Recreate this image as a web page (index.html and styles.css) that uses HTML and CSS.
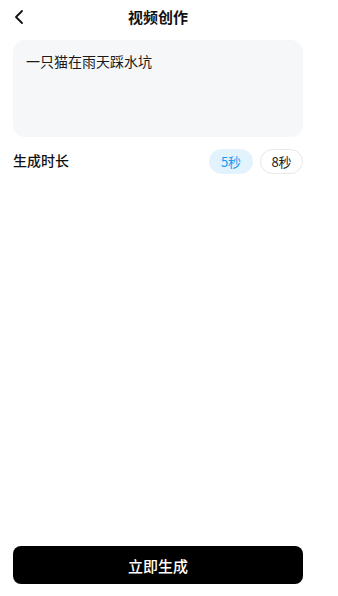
FILE: index.html
```html
<!DOCTYPE html>
<html lang="zh-CN">
<head>
  <meta charset="UTF-8">
  <title>视频创作</title>
  <link rel="stylesheet" href="styles.css">
</head>
<body>

<div class="page">
  <div class="top-bar">
    <button class="back-btn" type="button" aria-label="返回">
      <svg width="12" height="16" viewBox="0 0 12 16">
        <path d="M9 2 L3 8 L9 14" fill="none" stroke="#111" stroke-width="1.8" stroke-linecap="round" stroke-linejoin="round"/>
      </svg>
    </button>
    <h1 class="title">视频创作</h1>
  </div>

  <div class="prompt-box">
    <p class="prompt-text">一只猫在雨天踩水坑</p>
  </div>

  <div class="duration-row">
    <span class="duration-label">生成时长</span>
    <div class="duration-options">
      <button class="pill active" type="button">5秒</button>
      <button class="pill" type="button">8秒</button>
    </div>
  </div>

  <button class="generate-button" type="button">立即生成</button>
</div>

</body>
</html>
```

FILE: styles.css
```css
body {
  margin: 0;
  background: #fff;
  font-family: "Noto Sans CJK SC", "Noto Sans", sans-serif;
  color: #111;
}

.page {
  width: 290px;
  margin-left: 13px;
  height: 596px;
  display: flex;
  flex-direction: column;
  box-sizing: border-box;
  padding-bottom: 12px;
}

.top-bar {
  position: relative;
  height: 35px;
  display: flex;
  align-items: center;
  justify-content: center;
  padding-bottom: 2px;
  box-sizing: border-box;
}

.back-btn {
  position: absolute;
  left: 0;
  top: 8px;
  background: none;
  border: none;
  padding: 0;
  width: 14px;
  height: 18px;
  display: flex;
  align-items: center;
}

.title {
  margin: 0;
  font-size: 15px;
  font-weight: bold;
  line-height: 20px;
}

.prompt-box {
  margin-top: 5px;
  height: 97px;
  background: #f5f7f9;
  border-radius: 12px;
  padding: 11px 13px;
  box-sizing: border-box;
}

.prompt-text {
  margin: 0;
  font-size: 14px;
  line-height: 20px;
  color: #1a1a1a;
}

.duration-row {
  margin-top: 12px;
  display: flex;
  align-items: center;
  justify-content: space-between;
}

.duration-label {
  font-size: 14px;
  font-weight: 500;
  padding-bottom: 3px;
}

.duration-options {
  display: flex;
  gap: 7px;
}

.pill {
  height: 25px;
  width: 43px;
  padding: 0;
  border-radius: 13px;
  border: 1px solid #e8e8e8;
  background: #fff;
  font-family: inherit;
  font-size: 13px;
  color: #222;
  line-height: 23px;
}

.pill.active {
  width: 44px;
  background: #e2f3fd;
  border-color: #e2f3fd;
  color: #1b9bef;
}

.generate-button {
  margin-top: auto;
  height: 38px;
  width: 100%;
  border: none;
  border-radius: 8px;
  background: #000;
  color: #fff;
  font-family: inherit;
  font-size: 15px;
  font-weight: 500;
}
```
